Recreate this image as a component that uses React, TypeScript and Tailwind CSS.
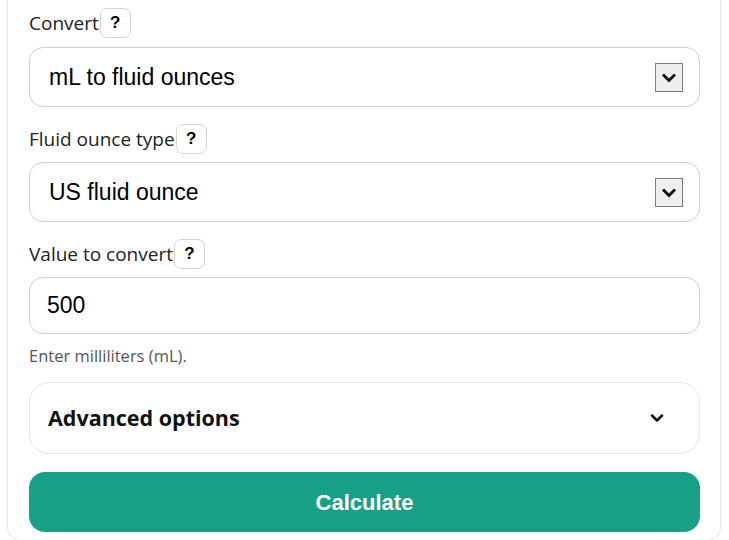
import { ChevronDown } from "lucide-react";

function HelpBadge() {
  return (
    <span className="ml-px inline-flex h-[30px] w-[31px] items-center justify-center rounded-[7px] border border-[#d4d4d4] bg-white font-['Liberation_Sans',sans-serif] text-[17px] font-bold text-black">
      ?
    </span>
  );
}

function FieldLabel({ text }: { text: string }) {
  return (
    <div className="flex h-[30px] items-center text-[19px] text-[#222]">
      <span>{text}</span>
      <HelpBadge />
    </div>
  );
}

function SelectBox({ value }: { value: string }) {
  return (
    <div className="flex h-[60px] items-center justify-between rounded-[14px] border border-[#cfcfcf] bg-white pl-[19px] pr-[16px]">
      <span className="font-['Liberation_Sans',Arial,sans-serif] text-[23px] text-black">{value}</span>
      <span className="flex h-[29px] w-[28px] items-center justify-center border border-[#7a7a7a] bg-[#efefef]">
        <svg width="16" height="11" viewBox="0 0 16 11">
          <path d="M2 2.5 L8 8.5 L14 2.5" fill="none" stroke="#111" strokeWidth="3" />
        </svg>
      </span>
    </div>
  );
}

export default function App() {
  return (
    <div className="min-h-[540px] bg-white font-['Open_Sans',sans-serif]">
      <div className="mx-[7px] w-[714px] rounded-b-[14px] border border-t-0 border-[#e6e6e6] pl-[21px] pr-[20px] pt-[8px] pb-[8px]">
        <FieldLabel text="Convert" />
        <div className="mt-[9px]">
          <SelectBox value="mL to fluid ounces" />
        </div>

        <div className="mt-[17px]">
          <FieldLabel text="Fluid ounce type" />
        </div>
        <div className="mt-[8px]">
          <SelectBox value="US fluid ounce" />
        </div>

        <div className="mt-[17px]">
          <FieldLabel text="Value to convert" />
        </div>
        <div className="mt-[8px] flex h-[57px] items-center rounded-[14px] border border-[#cfcfcf] bg-white pl-[17px]">
          <span className="font-['Liberation_Sans',Arial,sans-serif] text-[23px] text-black">500</span>
        </div>
        <p className="mt-[10px] text-[16.5px] leading-[24px] text-[#555]">Enter milliliters (mL).</p>

        <div className="mt-[14px] flex h-[72px] items-center justify-between rounded-[20px] border border-[#e3e3ea] bg-white pl-[18px] pr-[32px]">
          <span className="text-[21.5px] font-bold text-[#111]">Advanced options</span>
          <ChevronDown size={20} strokeWidth={3} className="text-[#111]" />
        </div>

        <button className="mt-[18px] flex h-[60px] w-full items-center justify-center rounded-[16px] bg-[#17a085] font-['Liberation_Sans',Arial,sans-serif] text-[22px] font-bold text-white">
          Calculate
        </button>
      </div>
    </div>
  );
}
